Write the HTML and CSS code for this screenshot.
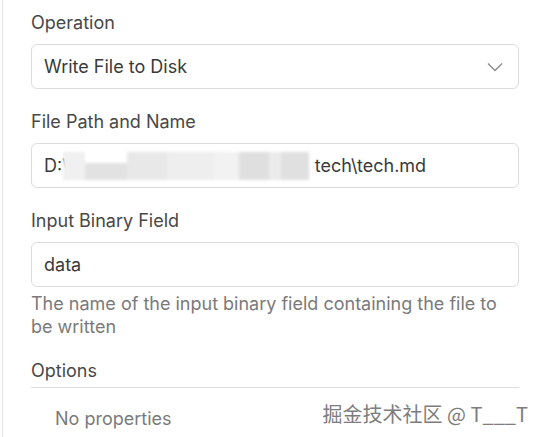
FILE: index.html
```html
<!DOCTYPE html>
<html lang="en">
<head>
<meta charset="utf-8">
<link rel="stylesheet" href="styles.css">
</head>
<body>
<div class="panel">
  <div class="field">
    <div class="label">Operation</div>
    <div class="input select">
      <span>Write File to Disk</span>
      <svg class="chev" width="16" height="10" viewBox="0 0 16 10"><path d="M1 1.5 L8 8.5 L15 1.5" fill="none" stroke="#8a8a8a" stroke-width="1.3"/></svg>
    </div>
  </div>
  <div class="field">
    <div class="label">File Path and Name</div>
    <div class="input">
      <span>D:\</span>
      <span class="redact">
        <i class="b1"></i><i class="b2"></i><i class="b3"></i><i class="b4"></i><i class="b5"></i><i class="b6"></i><i class="b7"></i><i class="b8"></i>
      </span>
      <span>tech\tech.md</span>
    </div>
  </div>
  <div class="field">
    <div class="label">Input Binary Field</div>
    <div class="input"><span>data</span></div>
    <div class="hint">The name of the input binary field containing the file to be written</div>
  </div>
  <div class="options">
    <div class="opt-title">Options</div>
    <div class="opt-row">
      <span class="noprops">No properties</span>
      <span class="wm">掘金技术社区 @ T___T</span>
    </div>
  </div>
</div>
</body>
</html>
```
FILE: styles.css
```css
html, body {
  margin: 0;
  padding: 0;
  background: #ffffff;
}
body {
  font-family: Inter, "Noto Sans", sans-serif;
  color: #444444;
  font-size: 18px;
}
.panel {
  margin-left: 2px;
  border-left: 1px solid #e4e4e4;
  padding: 13px 24px 0 28px;
  height: 437px;
  box-sizing: border-box;
  overflow: hidden;
}
.field {
  margin-bottom: 23px;
}
.label {
  line-height: 20px;
  height: 20px;
  margin-bottom: 11px;
  color: #484848;
}
.input {
  height: 45px;
  box-sizing: border-box;
  border: 1px solid #dcdcdc;
  border-radius: 6px;
  display: flex;
  align-items: center;
  padding: 0 12px;
  color: #3a3a3a;
}
.select {
  justify-content: space-between;
  padding-right: 15px;
}
.chev {
  display: block;
}
.redact {
  display: flex;
  align-items: center;
  height: 28px;
  width: 246px;
  margin-left: -6px;
  margin-right: 6px;
  filter: blur(1.8px);
}
.redact i {
  display: block;
  height: 100%;
}
.b1 { width: 22px; background: #f0f0f0; }
.b2 { width: 42px; background: #e2e2e2; height: 60% !important; align-self: flex-end; }
.b3 { width: 40px; background: #e8e8e8; }
.b4 { width: 48px; background: #eeeeee; }
.b5 { width: 24px; background: #f2f2f2; }
.b6 { width: 30px; background: #dfdfdf; }
.b7 { width: 12px; background: #ebebeb; }
.b8 { width: 28px; background: #e0e0e0; }
.hint {
  margin-top: 5px;
  line-height: 23px;
  color: #7a7a7a;
}
.opt-title {
  line-height: 20px;
  padding-bottom: 6px;
  border-bottom: 1px solid #dddddd;
  color: #484848;
}
.opt-row {
  display: flex;
  justify-content: space-between;
  align-items: center;
  padding: 11px 0 0 24px;
}
.noprops {
  color: #7a7a7a;
  line-height: 40px;
}
.wm {
  font-family: "Noto Sans CJK SC", sans-serif;
  font-size: 20px;
  color: #7d7d7d;
  margin-right: -9px;
  margin-top: -12px;
  white-space: nowrap;
  text-shadow: 0 0 1px #fff, 0 0 1px #fff;
}
```
